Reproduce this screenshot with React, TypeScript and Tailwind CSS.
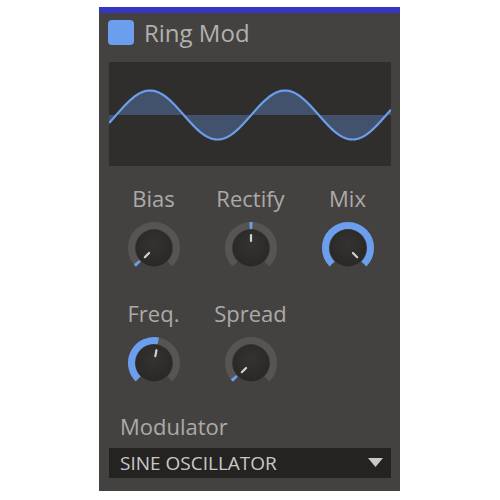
import React from "react";

const BLUE = "#6b9fee";
const TRACK = "#565553";

function polar(cx: number, cy: number, r: number, deg: number) {
  const a = (deg * Math.PI) / 180;
  return [cx + r * Math.sin(a), cy - r * Math.cos(a)];
}

function arc(cx: number, cy: number, r: number, a0: number, a1: number) {
  const [x0, y0] = polar(cx, cy, r, a0);
  const [x1, y1] = polar(cx, cy, r, a1);
  const large = a1 - a0 > 180 ? 1 : 0;
  return `M ${x0.toFixed(2)} ${y0.toFixed(2)} A ${r} ${r} 0 ${large} 1 ${x1.toFixed(2)} ${y1.toFixed(2)}`;
}

function Knob({ from, to, ind }: { from: number; to: number; ind: number }) {
  const c = 28;
  const [ix0, iy0] = polar(c, c, 7, ind);
  const [ix1, iy1] = polar(c, c, 13, ind);
  return (
    <svg width="56" height="56" viewBox="0 0 56 56">
      <defs>
        <radialGradient id="kg" cx="50%" cy="40%" r="60%">
          <stop offset="0%" stopColor="#343331" />
          <stop offset="100%" stopColor="#292827" />
        </radialGradient>
      </defs>
      <path d={arc(c, c, 22.5, -135, 135)} stroke={TRACK} strokeWidth="7" fill="none" />
      <path d={arc(c, c, 22.5, from, to)} stroke={BLUE} strokeWidth="7" fill="none" />
      <circle cx={c} cy={c} r="18.5" fill="url(#kg)" />
      <line x1={ix0} y1={iy0} x2={ix1} y2={iy1} stroke="#d2d2d2" strokeWidth="2.2" strokeLinecap="round" />
    </svg>
  );
}

const W = 282;
const H = 104;
const MID = 53;
const AMP = 24.5;
const pts: string[] = [];
for (let x = 0; x <= W; x += 1) {
  const y = MID - AMP * Math.cos((2 * Math.PI * (x - 41)) / 135);
  pts.push(`${x} ${y.toFixed(2)}`);
}
const linePath = "M " + pts.join(" L ");
const fillPath = `M 0 ${MID} L ` + pts.join(" L ") + ` L ${W} ${MID} Z`;

const font = { fontFamily: '"Open Sans", "Noto Sans", sans-serif' };

function Label({ children }: { children: React.ReactNode }) {
  return (
    <div className="text-[22px] leading-[28px] text-[#acaaa8] text-center">{children}</div>
  );
}

export default function App() {
  return (
    <div className="w-[500px] h-[500px] bg-white pt-[7px]" style={font}>
      <div className="ml-[99px] w-[301px] h-[484px] bg-[#444240] flex flex-col">
        <div className="h-[6px] bg-[#3636c2]" />
        <div className="flex items-center pl-[9px] pt-[7px] h-[32px]">
          <div className="w-[26px] h-[25px] rounded-[4px] bg-[#6b9fee]" />
          <div className="ml-[10px] text-[24px] leading-[32px] text-[#b2b0ae]">Ring Mod</div>
        </div>
        <div className="ml-[10px] mt-[17px] w-[282px] h-[104px] bg-[#302e2d]">
          <svg width={W} height={H} viewBox={`0 0 ${W} ${H}`}>
            <path d={fillPath} fill={BLUE} fillOpacity="0.33" />
            <path d={linePath} stroke={BLUE} strokeWidth="2.2" fill="none" />
          </svg>
        </div>
        <div className="ml-[6px] mt-[18px] grid grid-cols-[97px_97px_97px]">
          <div className="flex flex-col items-center">
            <Label>Bias</Label>
            <div className="mt-[8px]"><Knob from={-136} to={-129} ind={-135} /></div>
          </div>
          <div className="flex flex-col items-center">
            <Label>Rectify</Label>
            <div className="mt-[8px]"><Knob from={-3.5} to={3.5} ind={0} /></div>
          </div>
          <div className="flex flex-col items-center">
            <Label>Mix</Label>
            <div className="mt-[8px]"><Knob from={-135} to={135} ind={135} /></div>
          </div>
        </div>
        <div className="ml-[6px] mt-[23px] grid grid-cols-[97px_97px_97px]">
          <div className="flex flex-col items-center">
            <Label>Freq.</Label>
            <div className="mt-[8px]"><Knob from={-135} to={11} ind={11} /></div>
          </div>
          <div className="flex flex-col items-center">
            <Label>Spread</Label>
            <div className="mt-[8px]"><Knob from={-136} to={-129} ind={-135} /></div>
          </div>
        </div>
        <div className="ml-[21px] mt-[20px] text-[22px] leading-[30px] text-[#acaaa8]">Modulator</div>
        <div className="ml-[10px] mt-[7px] w-[282px] h-[30px] bg-[#242322] flex items-center justify-between pl-[11px] pr-[8px]">
          <span className="text-[19px] leading-[30px] text-[#cac8c6]">SINE OSCILLATOR</span>
          <svg width="15" height="10" viewBox="0 0 15 10">
            <polygon points="0,0 15,0 7.5,9" fill="#c8c8c8" />
          </svg>
        </div>
      </div>
    </div>
  );
}
